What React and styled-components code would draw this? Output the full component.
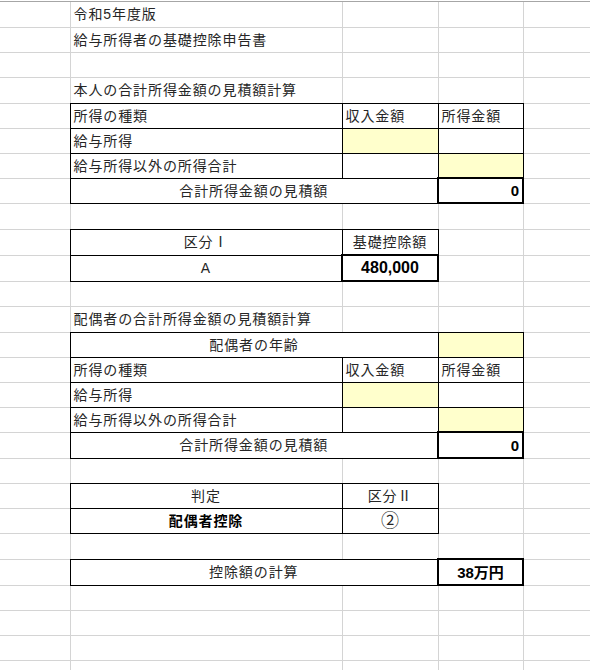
import styled, { createGlobalStyle } from 'styled-components';

const GlobalStyle = createGlobalStyle`
  html, body {
    margin: 0;
    padding: 0;
    background: #fff;
    overflow: hidden;
  }
  body {
    font-family: "Liberation Sans", "Noto Sans CJK JP", sans-serif;
  }
`;

const GRID = '#d4d4d4';

const columns = [70, 272, 96, 85, 140];

// one entry per spreadsheet row: height, then cells for columns B, C, D
const rows = [
  { h: 25, cells: [{ t: '令和5年度版' }] },
  { h: 25, cells: [{ t: '給与所得者の基礎控除申告書' }] },
  { h: 25, cells: [] },
  { h: 26, cells: [{ t: '本人の合計所得金額の見積額計算' }] },
  { h: 25, cells: [{ t: '所得の種類', b: true }, { t: '収入金額', b: true }, { t: '所得金額', b: true }] },
  { h: 25, cells: [{ t: '給与所得', b: true }, { b: true, y: true }, { b: true }] },
  { h: 25, cells: [{ t: '給与所得以外の所得合計', b: true }, { b: true }, { b: true, y: true }] },
  { h: 25, cells: [{ t: '合計所得金額の見積額', b: true, s: 2, a: 'center' }, { t: '0', k: true, a: 'right', n: true }] },
  { h: 26, cells: [] },
  { h: 26, cells: [{ t: '区分Ⅰ', b: true, a: 'center' }, { t: '基礎控除額', b: true, a: 'center' }, {}] },
  { h: 26, cells: [{ t: 'A', b: true, a: 'center' }, { t: '480,000', k: true, a: 'center', n: true, z: 16 }, {}] },
  { h: 25, cells: [] },
  { h: 26, cells: [{ t: '配偶者の合計所得金額の見積額計算' }] },
  { h: 25, cells: [{ t: '配偶者の年齢', b: true, s: 2, a: 'center' }, { b: true, y: true }] },
  { h: 25, cells: [{ t: '所得の種類', b: true }, { t: '収入金額', b: true }, { t: '所得金額', b: true }] },
  { h: 25, cells: [{ t: '給与所得', b: true }, { b: true, y: true }, { b: true }] },
  { h: 25, cells: [{ t: '給与所得以外の所得合計', b: true }, { b: true }, { b: true, y: true }] },
  { h: 26, cells: [{ t: '合計所得金額の見積額', b: true, s: 2, a: 'center' }, { t: '0', k: true, a: 'right', n: true }] },
  { h: 25, cells: [] },
  { h: 25, cells: [{ t: '判定', b: true, a: 'center' }, { t: '区分Ⅱ', b: true, a: 'center' }, {}] },
  { h: 25, cells: [{ t: '配偶者控除', b: true, a: 'center', w: true }, { t: '②', b: true, a: 'center', z: 18 }, {}] },
  { h: 26, cells: [] },
  { h: 26, cells: [{ t: '控除額の計算', b: true, s: 2, a: 'center' }, { t: '38万円', k: true, a: 'center', n: true }] },
  { h: 25, cells: [] },
  { h: 25, cells: [] },
  { h: 25, cells: [] },
  { h: 25, cells: [] },
];

function fillRow(cells) {
  const out = [...cells];
  let used = out.reduce((sum, c) => sum + (c.s || 1), 0);
  while (used < 3) {
    out.push({});
    used += 1;
  }
  return out;
}

export default function App() {
  return (
    <>
      <GlobalStyle />
      <Sheet>
        <Table>
          <colgroup>
            {columns.map((w, i) => (
              <Col key={i} $w={w} />
            ))}
          </colgroup>
          <tbody>
            {rows.map((row, r) => (
              <Row key={r} $h={row.h}>
                <Cell />
                {fillRow(row.cells).map((c, i) => (
                  <Cell
                    key={i}
                    colSpan={c.s || 1}
                    $align={c.a}
                    $box={c.b}
                    $thick={c.k}
                    $fill={c.y}
                    $bold={c.w}
                    $num={c.n}
                    $size={c.z}
                  >
                    {c.t}
                  </Cell>
                ))}
                <Cell />
              </Row>
            ))}
          </tbody>
        </Table>
      </Sheet>
    </>
  );
}

const Sheet = styled.div`
  margin-top: 1px;
  border-top: 1px solid #a6a6a6;
  height: 669px;
  overflow: hidden;
`;

const Table = styled.table`
  border-collapse: collapse;
  table-layout: fixed;
  width: 663px;
`;

const Col = styled.col`
  width: ${(p) => p.$w}px;
  border-right: 1px solid ${GRID};
`;

const Row = styled.tr`
  height: ${(p) => p.$h}px;
  border-bottom: 1px solid ${GRID};
`;

const Cell = styled.td`
  padding: 0 3px;
  font-size: ${(p) => (p.$size ? `${p.$size}px` : p.$num ? '15px' : '14px')};
  letter-spacing: ${(p) => (p.$num || p.$size ? '0' : '0.9px')};
  font-weight: ${(p) => (p.$bold || p.$num ? 700 : 400)};
  color: ${(p) => (p.$bold || p.$num ? '#000' : '#262626')};
  text-align: ${(p) => p.$align || 'left'};
  white-space: nowrap;
  line-height: 1;
  background: ${(p) => (p.$fill ? '#ffffcc' : 'transparent')};
  border: ${(p) => (p.$thick ? '2px solid #000' : p.$box ? '1px solid #000' : 'none')};
`;
